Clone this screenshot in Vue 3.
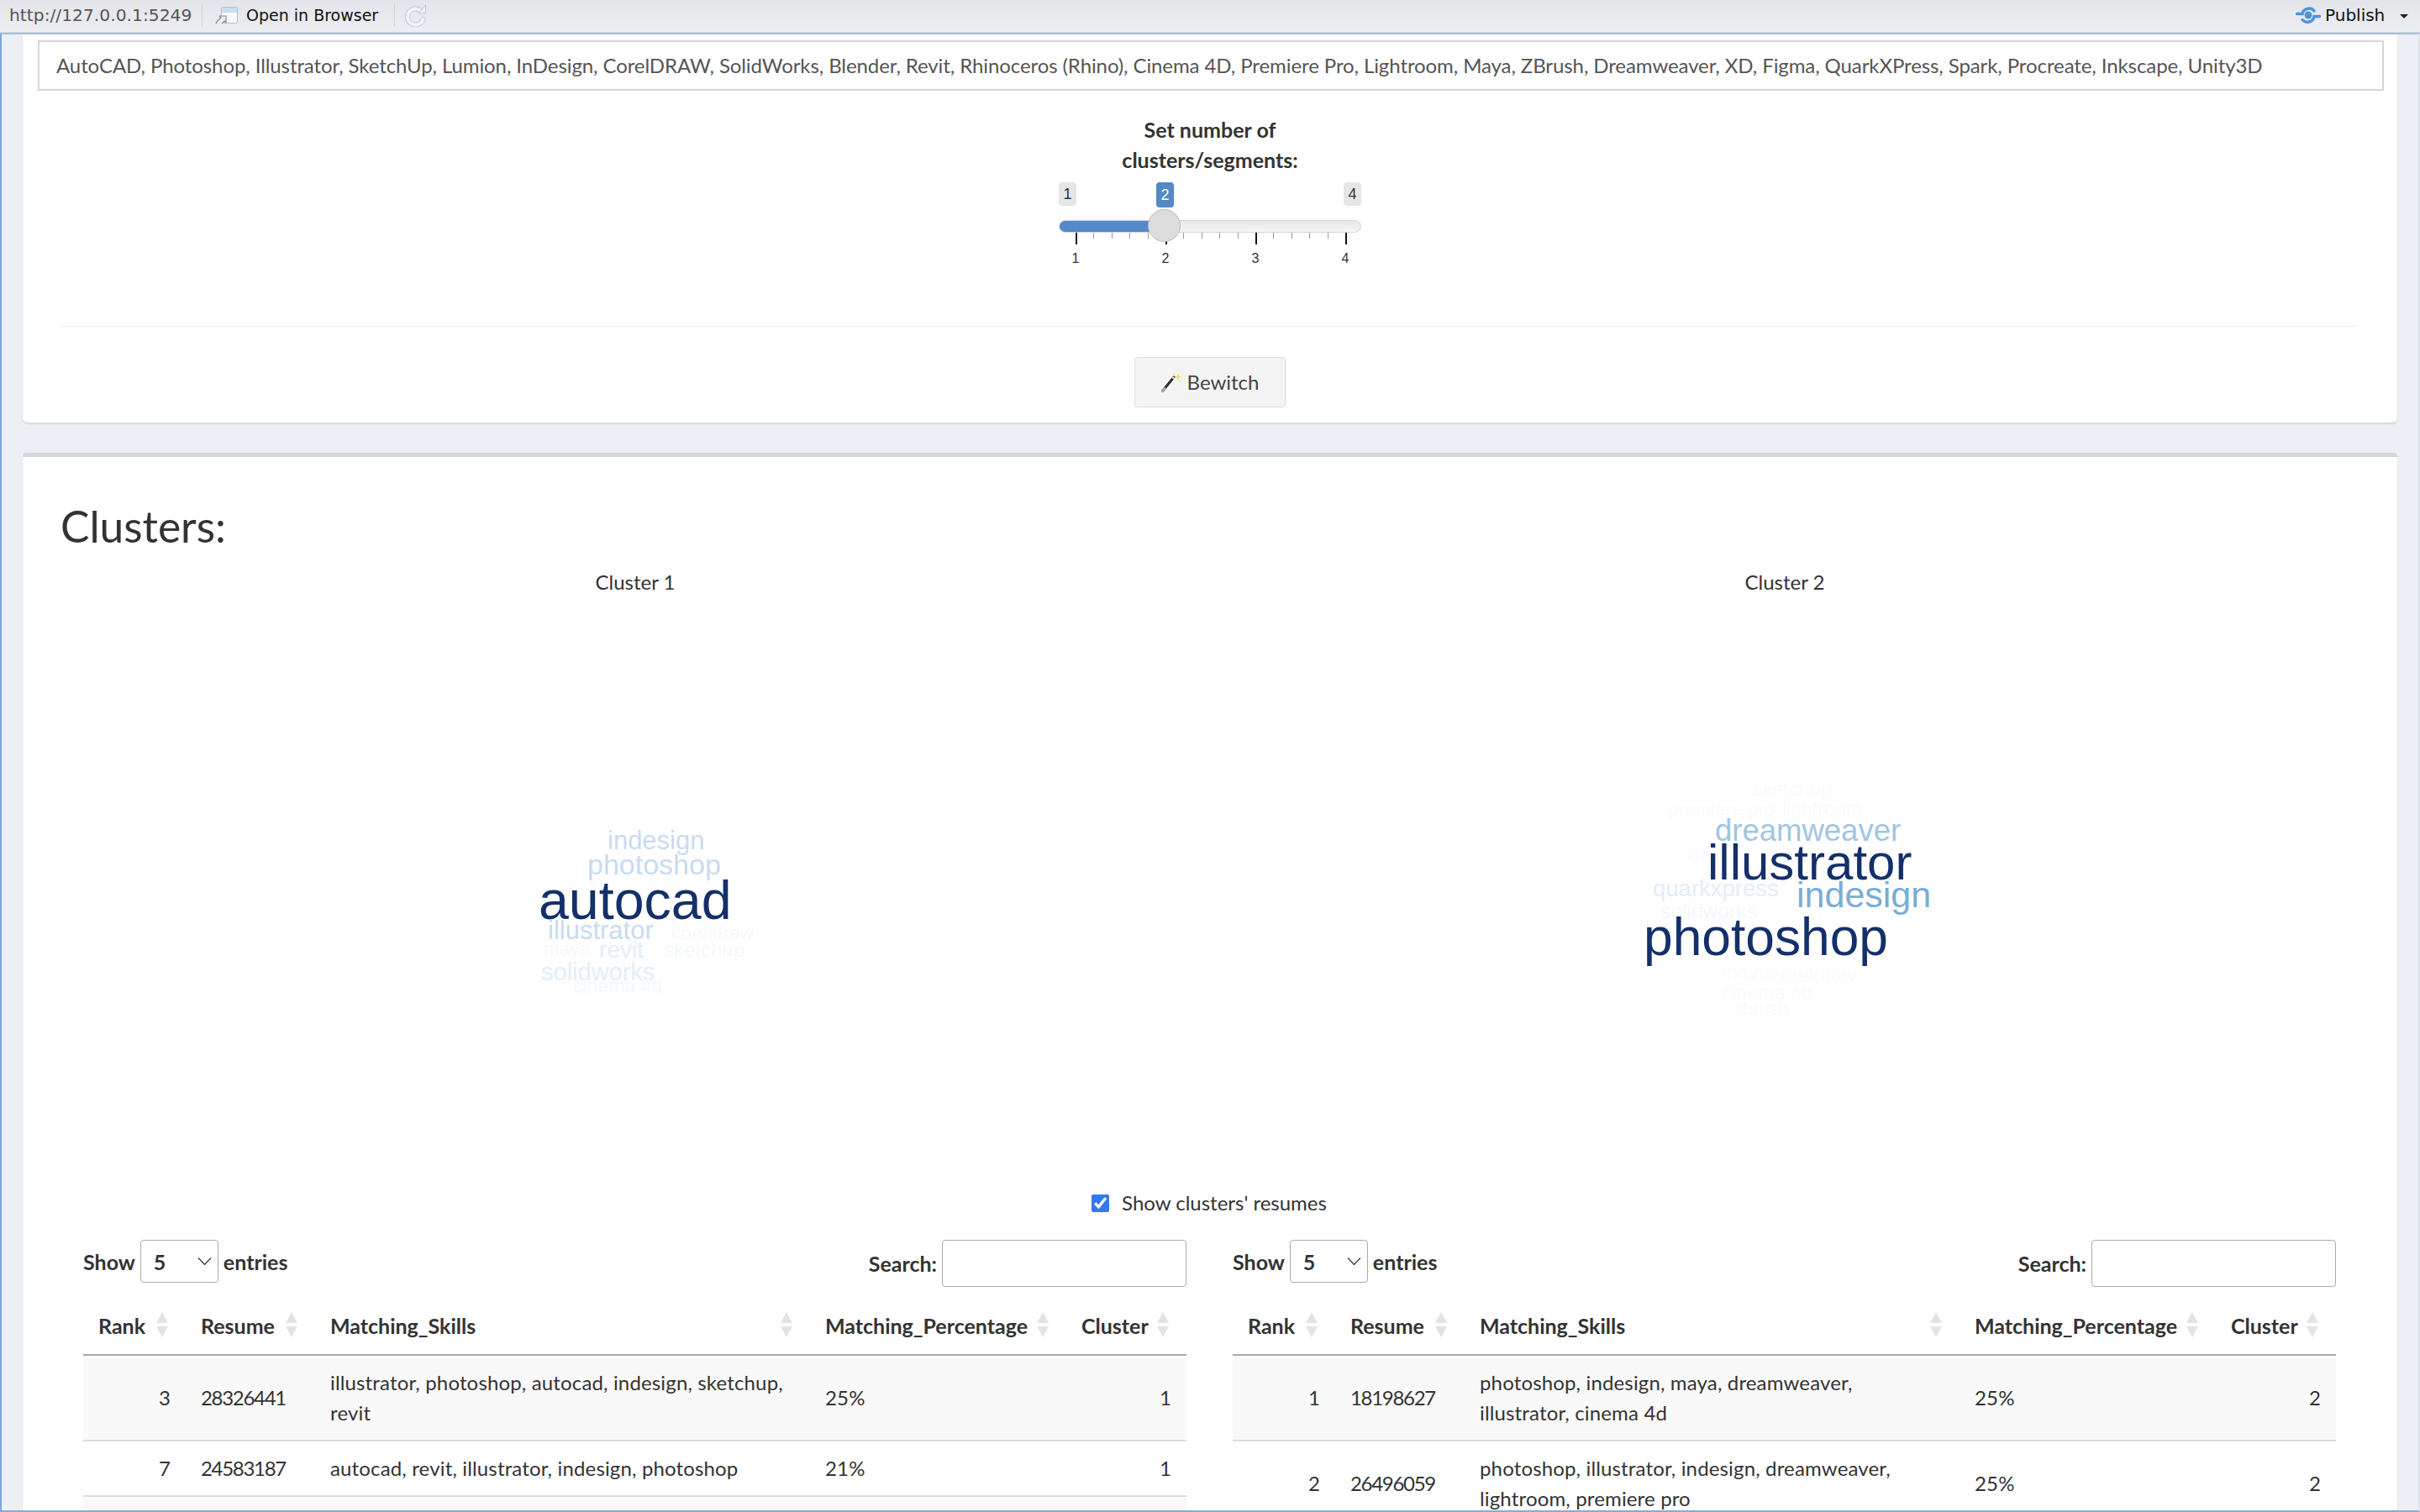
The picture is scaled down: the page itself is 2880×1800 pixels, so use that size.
<template>
  <div class="viewer">
    <header class="toolbar">
      <span class="url">http://127.0.0.1:5249</span>
      <span class="sep sep-url"></span>
      <svg class="open-icon" viewBox="0 0 28 20" width="28" height="20">
        <rect x="8.5" y="0.5" width="19" height="19" rx="2" fill="#f7f9fb" stroke="#b4bec9" />
        <path d="M9 3a2 2 0 0 1 2-2h14a2 2 0 0 1 2 2v4H9z" fill="#c9def2" />
        <path d="M2 19l6-6-2-2h8v8l-2-2-6 6z" fill="#eef1f4" stroke="#7f8993" stroke-width="1.2" stroke-linejoin="round" />
      </svg>
      <span class="open-label">Open in Browser</span>
      <span class="sep sep-open"></span>
      <svg class="reload-icon" viewBox="0 0 26 28" width="26" height="28">
        <path d="M19 9a9.5 9.5 0 1 0 2.5 10" fill="none" stroke="#bccbdb" stroke-width="6" stroke-linecap="round" />
        <path d="M19 9a9.5 9.5 0 1 0 2.5 10" fill="none" stroke="#f0f3f7" stroke-width="4" stroke-linecap="round" />
        <path d="M16 12l8.500-1V2z" fill="#f0f3f7" stroke="#bccbdb" stroke-linejoin="round" />
      </svg>
      <span class="spacer"></span>
      <svg class="publish-icon" viewBox="0 0 30 22" width="30" height="22">
        <path d="M1.500 9.500h6.500a8 8 0 0 1 14-3.500" fill="none" stroke="#4a94dc" stroke-width="3.400" stroke-linecap="round" />
        <path d="M28.500 12.500h-6.500a8 8 0 0 1-14 4" fill="none" stroke="#4a94dc" stroke-width="3.400" stroke-linecap="round" />
        <circle cx="15" cy="11" r="4.500" fill="#4a94dc" />
      </svg>
      <span class="publish-label">Publish</span>
      <span class="caret"></span>
    </header>

    <main class="frame">
      <section class="card card-top">
        <div class="well">{{ skills }}</div>
        <div class="slider-block">
          <label class="slider-label">Set number of<br />clusters/segments:</label>
          <div class="slider">
            <span class="edge edge-min">1</span>
            <span class="edge edge-max">4</span>
            <span class="current">2</span>
            <div class="track"><div class="fill"></div></div>
            <span class="handle"></span>
            <div class="ticks">
              <span
                v-for="t in ticks"
                :key="t.pos"
                class="tick"
                :class="{ major: t.major }"
                :style="{ left: t.pos + 'px' }"
              ></span>
            </div>
            <div class="tick-labels">
              <span v-for="(n, i) in 4" :key="n" class="tick-label" :style="{ left: 20 + i * 107 + 'px' }">{{ n }}</span>
            </div>
          </div>
        </div>
        <hr class="rule" />
        <div class="action">
          <button class="btn" type="button">
            <svg viewBox="0 0 24 24" width="24" height="24" class="wand">
              <path d="M1.500 22.500L15 6" stroke="#2e2e2e" stroke-width="3" stroke-linecap="round" />
              <path d="M1.500 22.500L4 19.500" stroke="#a8a8a8" stroke-width="3" stroke-linecap="round" />
              <path d="M13.500 7.800L15 6" stroke="#ddd" stroke-width="3" />
              <path d="M20 1l1 3.500 3 1-3 1-1 3.500-1-3.500-3-1 3-1z" fill="#f2d968" />
              <circle cx="15" cy="2" r="1" fill="#f2d968" />
              <circle cx="22.500" cy="11" r="0.800" fill="#f2d968" />
            </svg>
            Bewitch
          </button>
        </div>
      </section>

      <section class="card card-clusters">
        <h2 class="title">Clusters:</h2>
        <div class="clouds">
          <div v-for="c in clouds" :key="c.label" class="cloud">
            <div class="cloud-label">{{ c.label }}</div>
            <svg class="cloud-svg" width="1368" height="630" viewBox="0 0 1368 630">
              <text
                v-for="w in c.words"
                :key="w.t"
                :x="w.x - c.ox"
                :y="w.y - 711"
                :font-size="w.s"
                :fill="w.c"
              >{{ w.t }}</text>
            </svg>
          </div>
        </div>
        <label class="show-resumes">
          <input type="checkbox" checked />
          <span>Show clusters' resumes</span>
        </label>
        <div class="tables">
          <div v-for="tb in tables" :key="tb.cluster" class="dt">
            <div class="dt-top">
              <div class="dt-length">
                <span>Show</span>
                <span class="select">5
                  <svg viewBox="0 0 17 9" width="17" height="9"><path d="M1 .5l7.500 8 7.500-8" fill="none" stroke="#333" stroke-width="1.200" /></svg>
                </span>
                <span>entries</span>
              </div>
              <div class="dt-search">
                <span>Search:</span>
                <span class="search-box"></span>
              </div>
            </div>
            <table class="grid">
              <thead>
                <tr>
                  <th v-for="h in headers" :key="h" :class="'col-' + h.toLowerCase()">
                    {{ h }}
                    <span class="sort"><i class="up"></i><i class="down"></i></span>
                  </th>
                </tr>
              </thead>
              <tbody>
                <tr v-for="(r, i) in tb.rows" :key="i">
                  <td class="num">{{ r.rank }}</td>
                  <td class="digits">{{ r.resume }}</td>
                  <td class="skills">{{ r.skills }}</td>
                  <td>{{ r.pct }}</td>
                  <td class="num">{{ r.rank && tb.cluster }}</td>
                </tr>
              </tbody>
            </table>
          </div>
        </div>
      </section>
    </main>
  </div>
</template>

<script setup>
const skills = 'AutoCAD, Photoshop, Illustrator, SketchUp, Lumion, InDesign, CorelDRAW, SolidWorks, Blender, Revit, Rhinoceros (Rhino), Cinema 4D, Premiere Pro, Lightroom, Maya, ZBrush, Dreamweaver, XD, Figma, QuarkXPress, Spark, Procreate, Inkscape, Unity3D';

const ticks = [];
for (let i = 0; i <= 15; i++) {
  ticks.push({ pos: 20 + i * 21.4, major: i % 5 === 0 });
}

const headers = ['Rank', 'Resume', 'Matching_Skills', 'Matching_Percentage', 'Cluster'];

const dark = '#14306a';
const faint = '#f5f8fd';
const fainter = '#f9fbfe';
const pale = '#e3edf8';
const soft = '#c9dbef';

const clouds = [
  {
    label: 'Cluster 1',
    ox: 72,
    words: [
      { t: 'indesign', x: 723, y: 1011, s: 31, c: soft },
      { t: 'photoshop', x: 699, y: 1041, s: 34, c: soft },
      { t: 'autocad', x: 641, y: 1094, s: 64.500, c: dark },
      { t: 'illustrator', x: 652, y: 1118, s: 31, c: soft },
      { t: 'coreldraw', x: 799, y: 1118, s: 22.500, c: faint },
      { t: 'maya', x: 647, y: 1137, s: 22.500, c: faint },
      { t: 'revit', x: 713, y: 1140, s: 28, c: pale },
      { t: 'sketchup', x: 790, y: 1139, s: 24, c: faint },
      { t: 'solidworks', x: 644, y: 1167, s: 29, c: pale },
      { t: 'cinema 4d', x: 682, y: 1182, s: 23, c: faint }
    ]
  },
  {
    label: 'Cluster 2',
    ox: 1440,
    words: [
      { t: 'sketchup', x: 2086, y: 948, s: 23.500, c: fainter },
      { t: 'premiere pro', x: 1985, y: 971, s: 22.500, c: fainter },
      { t: 'lightroom', x: 2121, y: 971, s: 23, c: fainter },
      { t: 'dreamweaver', x: 2041, y: 1001, s: 36.500, c: '#a0c6e2' },
      { t: 'xd', x: 2006, y: 1025, s: 23, c: fainter },
      { t: 'illustrator', x: 2032, y: 1047, s: 60, c: dark },
      { t: 'quarkxpress', x: 1967, y: 1067, s: 27.500, c: pale },
      { t: 'indesign', x: 2138, y: 1080, s: 43, c: '#7aacd6' },
      { t: 'solidworks', x: 1976, y: 1093, s: 24.600, c: faint },
      { t: 'photoshop', x: 1956, y: 1137, s: 62.300, c: dark },
      { t: 'maya', x: 2048, y: 1165, s: 24, c: fainter },
      { t: 'coreldraw', x: 2107, y: 1169, s: 23.700, c: fainter },
      { t: 'cinema 4d', x: 2049, y: 1190, s: 23.400, c: fainter },
      { t: 'zbrush', x: 2063, y: 1208, s: 22, c: fainter }
    ]
  }
];

const tables = [
  {
    cluster: 1,
    rows: [
      { rank: 3, resume: 28326441, skills: 'illustrator, photoshop, autocad, indesign, sketchup,\nrevit', pct: '25%' },
      { rank: 7, resume: 24583187, skills: 'autocad, revit, illustrator, indesign, photoshop', pct: '21%' },
      { rank: '', resume: '', skills: '', pct: '' }
    ]
  },
  {
    cluster: 2,
    rows: [
      { rank: 1, resume: 18198627, skills: 'photoshop, indesign, maya, dreamweaver,\nillustrator, cinema 4d', pct: '25%' },
      { rank: 2, resume: 26496059, skills: 'photoshop, illustrator, indesign, dreamweaver,\nlightroom, premiere pro', pct: '25%' }
    ]
  }
];
</script>

<style>
html, body { margin: 0; background: #fff; }
</style>

<style scoped>
.viewer {
  width: 2880px;
  height: 1800px;
  overflow: hidden;
  display: flex;
  flex-direction: column;
  font-family: Lato, "Noto Sans", sans-serif;
  font-size: 24px;
  line-height: 36px;
  color: #333;
}

/* IDE toolbar */
.toolbar {
  flex: 0 0 39px;
  display: flex;
  align-items: center;
  padding: 0 14px 2px 11px;
  box-sizing: border-box;
  background: linear-gradient(#e3e5ea, #eceef1);
  border-bottom: 1px solid #d3d6dc;
  font-family: "DejaVu Sans", sans-serif;
  font-size: 19px;
  color: #111;
}
.url { width: 217px; color: #555; font-size: 20.300px; white-space: nowrap; }
.sep { width: 1px; height: 28px; background: #cfd2d8; }
.sep-url { margin: 0 14px 0 12px; }
.sep-open { margin: 0 12px 0 18px; }
.open-label { margin-left: 10px; width: 158px; white-space: nowrap; }
.spacer { flex: 1; }
.publish-label { margin-left: 5px; width: 70px; font-size: 20px; }
.caret {
  margin: 2px 0 0 19px;
  border: 5px solid transparent;
  border-top: 5px solid #222;
  border-bottom: 0;
  width: 0;
}

.frame {
  flex: 1;
  min-height: 0;
  overflow: hidden;
  background: #ecf0f5;
  border: 2px solid;
  border-color: #a9bfe0 #dfe3ea #8fa9cf #7ea6e0;
  padding: 0 25px;
}

.card {
  background: #fff;
  border-radius: 4px;
  box-shadow: 0 2px 2px rgba(0, 0, 0, 0.1);
}
.card-top {
  height: 462px;
  box-sizing: border-box;
  padding-top: 7px;
  border-radius: 0 0 6px 6px;
  margin-bottom: 36px;
}
.well {
  margin: 0 16px 0 18px;
  height: 60px;
  box-sizing: border-box;
  border: 2px solid #d2d6e0;
  padding: 0 20px;
  line-height: 56px;
  white-space: nowrap;
  color: #555;
  letter-spacing: -0.09px;
}
.slider-block {
  width: 360px;
  margin: 28px auto 0;
}
.slider-label {
  display: block;
  text-align: center;
  font-weight: 700;
  font-size: 25px;
}
.slider {
  position: relative;
  height: 100px;
  margin-top: 9px;
  font-family: "Liberation Sans", sans-serif;
}
.edge, .current {
  position: absolute;
  top: 0;
  width: 21px;
  height: 28px;
  line-height: 28px;
  text-align: center;
  border-radius: 4px;
  font-size: 18px;
  background: #e6e6e6;
}
.edge-min { left: 0; }
.edge-max { right: 0; }
.current {
  left: 116px;
  height: 30px;
  line-height: 30px;
  background: #5488c7;
  color: #fff;
}
.track {
  position: absolute;
  top: 45px;
  left: 0;
  right: 0;
  height: 15px;
  box-sizing: border-box;
  border: 1px solid #d4d4d4;
  border-radius: 8px;
  background: linear-gradient(#e8e8e8, #f5f5f5);
  overflow: hidden;
}
.fill {
  position: absolute;
  inset: -1px auto -1px -1px;
  width: 130px;
  background: #5488c7;
}
.handle {
  position: absolute;
  top: 32px;
  left: 106px;
  width: 39px;
  height: 39px;
  box-sizing: border-box;
  border-radius: 50%;
  border: 1px solid #bbb;
  background: #dcdcdc;
  z-index: 2;
}
.tick {
  position: absolute;
  top: 60px;
  width: 1px;
  height: 7px;
  background: #999;
}
.tick.major {
  height: 14px;
  width: 2px;
  background: #111;
}
.tick-label {
  position: absolute;
  top: 81px;
  transform: translateX(-50%);
  font-size: 16px;
  line-height: 20px;
}
.rule {
  border: 0;
  border-top: 1px solid #eee;
  margin: 71px 48px 0 45px;
}
.action {
  display: flex;
  justify-content: center;
  margin-top: 36px;
}
.btn {
  width: 180px;
  height: 60px;
  display: flex;
  align-items: center;
  justify-content: center;
  gap: 7px;
  border: 1px solid #ddd;
  border-radius: 4px;
  background: #f4f4f4;
  color: #444;
  font: inherit;
}

.card-clusters {
  border-top: 5px solid #d2d6de;
  min-height: 1300px;
  padding: 0 45px;
}
.title {
  margin: 0;
  padding-top: 56px;
  font-size: 51.500px;
  line-height: 52px;
  font-weight: 400;
}
.clouds {
  display: grid;
  grid-template-columns: 1368px 1368px;
  margin-top: 23px;
}
.cloud-label {
  text-align: center;
  height: 36px;
}
.cloud-svg {
  display: block;
  font-family: "Liberation Sans", Arial, sans-serif;
}
.show-resumes {
  display: flex;
  align-items: center;
  justify-content: center;
  gap: 15px;
  margin-top: 73px;
  height: 36px;
}
.show-resumes input {
  margin: 0 0 0 -2px;
  width: 21px;
  height: 21px;
  accent-color: #3478f6;
}
.tables {
  display: grid;
  grid-template-columns: 1313px 1313px;
  gap: 55px;
  margin-top: 26px;
  margin-left: 27px;
}
.dt-top {
  display: flex;
  justify-content: space-between;
  align-items: flex-start;
  height: 67px;
  font-weight: 700;
  font-size: 25px;
}
.dt-length, .dt-search {
  display: flex;
  align-items: center;
  gap: 6px;
}
.select {
  width: 93px;
  height: 51px;
  box-sizing: border-box;
  border: 1px solid #aaa;
  border-radius: 4px;
  display: flex;
  align-items: center;
  justify-content: space-between;
  padding: 0 7px 0 15px;
}
.search-box {
  width: 291px;
  height: 56px;
  box-sizing: border-box;
  border: 1px solid #aaa;
  border-radius: 4px;
}
.grid {
  width: 1313px;
  border-collapse: collapse;
  table-layout: fixed;
}
.grid th {
  position: relative;
  box-sizing: border-box;
  height: 70px;
  padding: 0 18px;
  text-align: left;
  font-weight: 700;
  font-size: 25px;
  border-bottom: 2px solid #aaa;
  white-space: nowrap;
}
.grid th.col-rank { width: 122px; }
.grid th.col-resume { width: 154px; }
.grid th.col-matching_skills { width: 589px; }
.grid th.col-matching_percentage { width: 305px; }
.sort {
  position: absolute;
  right: 21px;
  top: 19px;
  display: flex;
  flex-direction: column;
  gap: 4px;
}
.sort i {
  width: 0;
  border: 7px solid transparent;
  border-top: 0;
  border-bottom: 13px solid #e3e3e3;
}
.sort i.down {
  border-bottom: 0;
  border-top: 13px solid #e3e3e3;
}
.grid td {
  padding: 14px 18px;
  vertical-align: middle;
  border-bottom: 2px solid #ddd;
  letter-spacing: 0.15px;
}
.grid tbody tr:nth-child(odd) { background: #f9f9f9; }
.grid td.num { text-align: right; }
.grid td.digits { letter-spacing: -1.300px; }
.grid td.skills { white-space: pre-line; }
</style>
